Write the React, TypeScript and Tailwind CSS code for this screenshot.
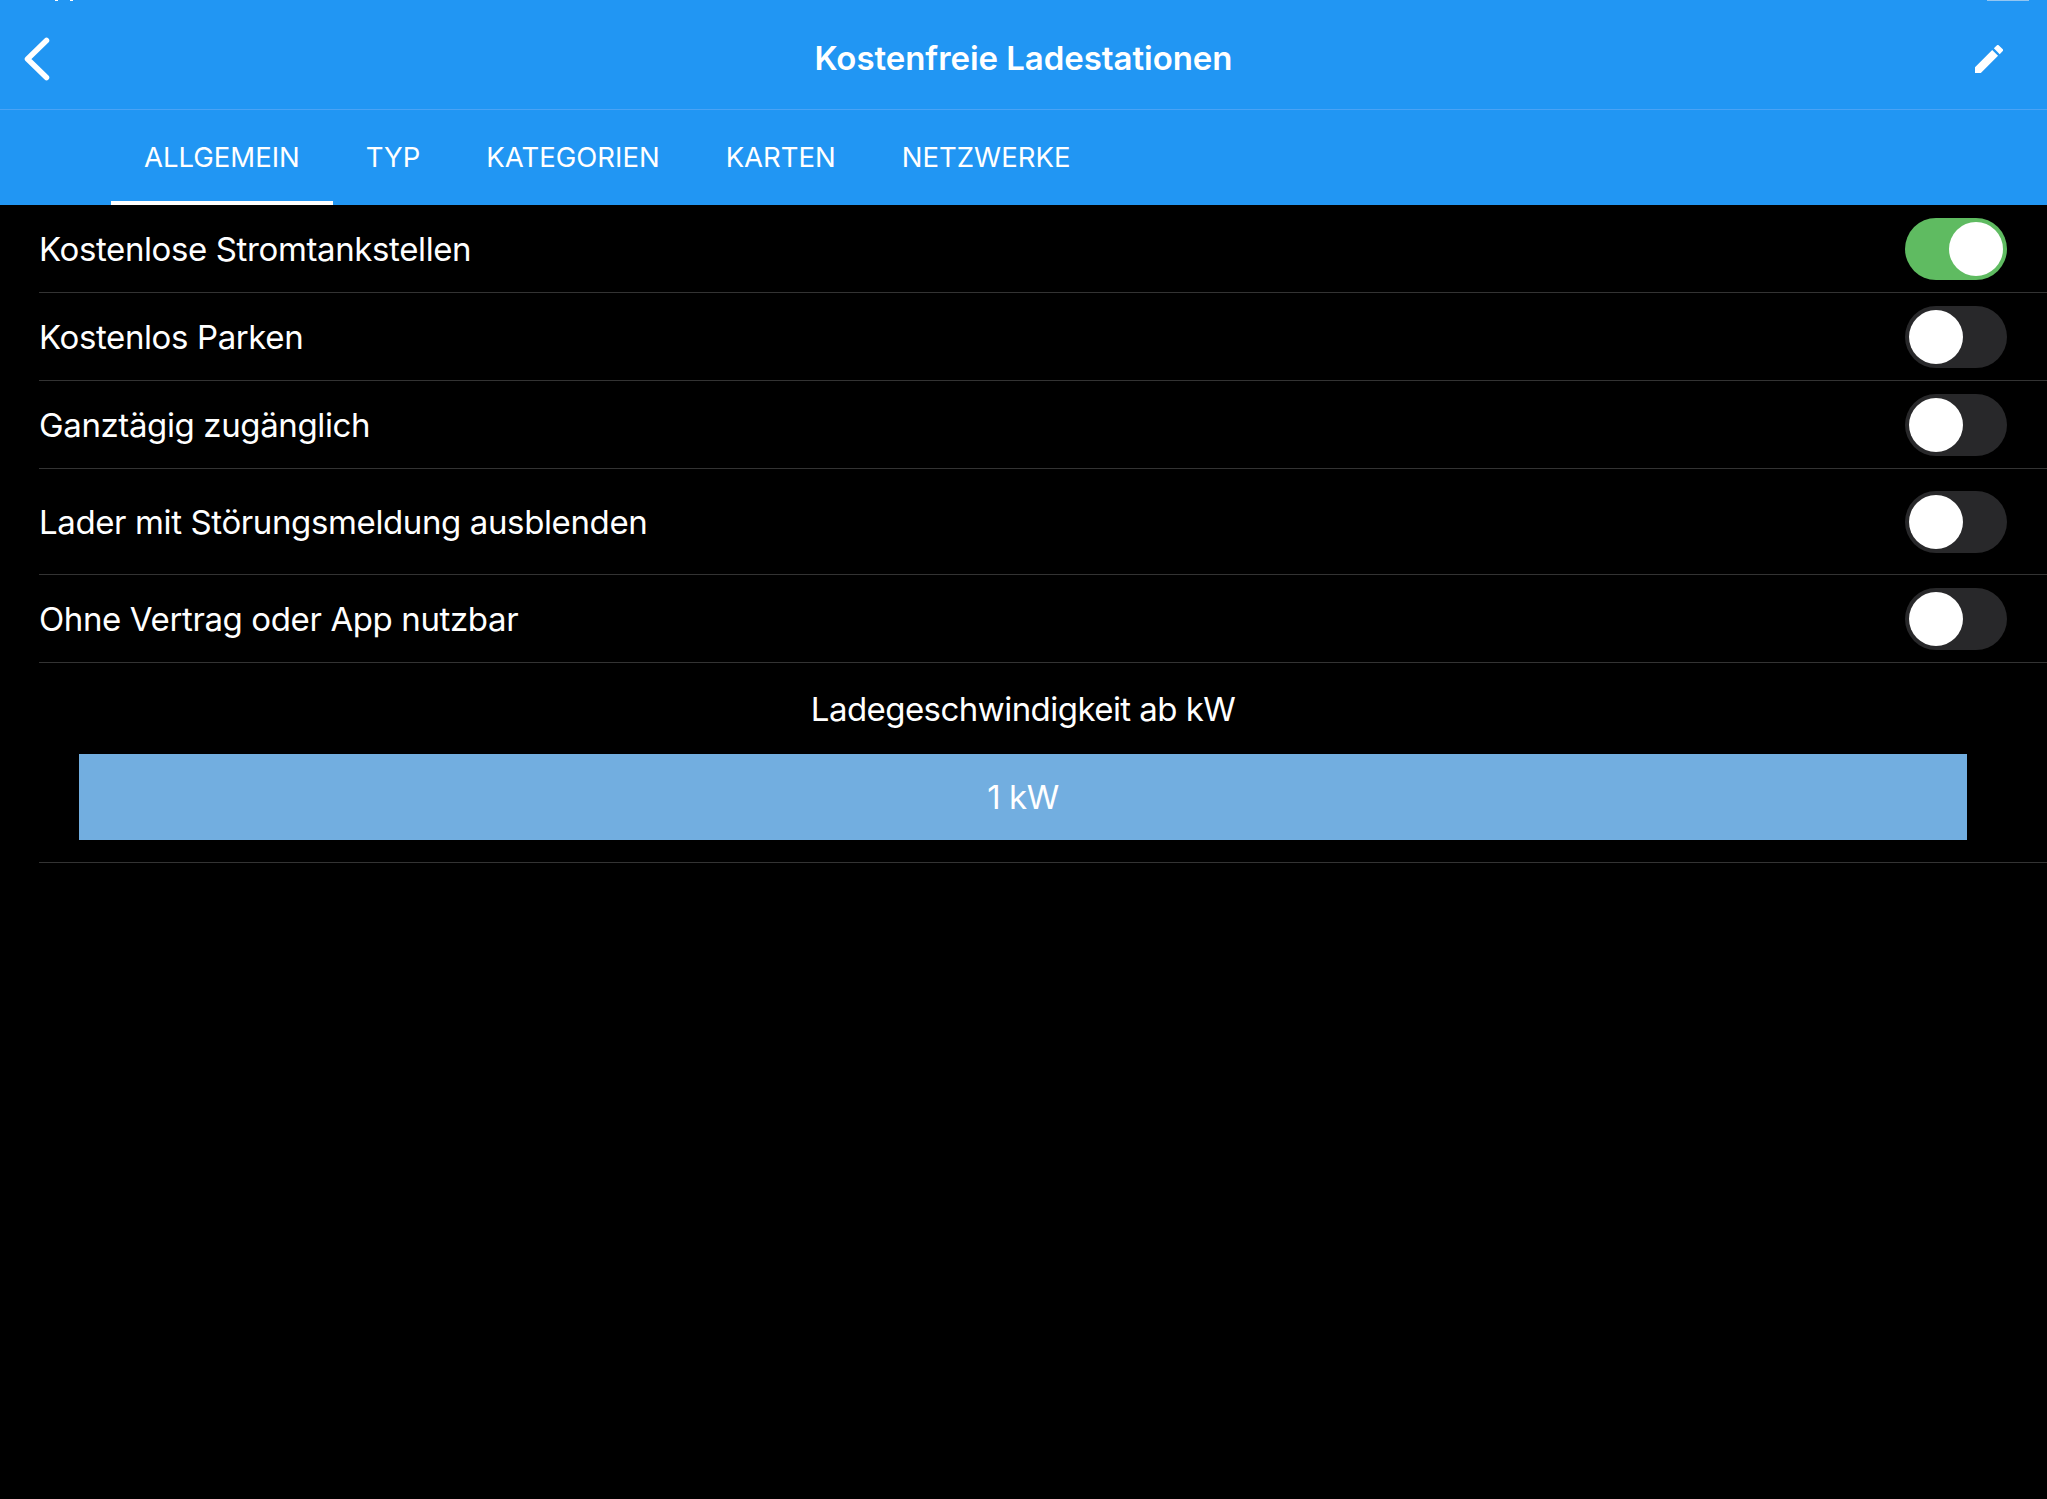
import React from 'react';

const tabs = ['ALLGEMEIN', 'TYP', 'KATEGORIEN', 'KARTEN', 'NETZWERKE'];

const rows = [
  { label: 'Kostenlose Stromtankstellen', on: true, tall: false },
  { label: 'Kostenlos Parken', on: false, tall: false },
  { label: 'Ganztägig zugänglich', on: false, tall: false },
  { label: 'Lader mit Störungsmeldung ausblenden', on: false, tall: true },
  { label: 'Ohne Vertrag oder App nutzbar', on: false, tall: false },
];

const Toggle = ({ on }: { on: boolean }) => (
  <div className={`flex h-[62px] w-[102px] items-center rounded-full px-[4px] ${on ? 'justify-end bg-[#5fbb61]' : 'justify-start bg-[#28282a]'}`}>
    <div className="h-[54px] w-[54px] rounded-full bg-white" />
  </div>
);

export default function App() {
  return (
    <div className="relative flex h-[1499px] w-full flex-col overflow-hidden bg-black font-['Inter',sans-serif] text-white">
      {/* Status bar, cut off at the top edge */}
      <div className="absolute left-[55px] top-0 h-[1px] w-[3px] bg-white" />
      <div className="absolute left-[70px] top-0 h-[1px] w-[3px] bg-white" />
      <div className="absolute left-[1987px] top-0 h-[1px] w-[42px] bg-[#93c6f2]" />

      {/* Header */}
      <div className="flex h-[110px] shrink-0 items-center border-b border-[#4aa3f5] bg-[#2196f3] px-[24px] pt-[9px]">
        <div className="flex-1">
          <svg width="26" height="44" viewBox="0 0 26 44" fill="none" stroke="white" strokeWidth="5.5" strokeLinecap="round" strokeLinejoin="round">
            <path d="M22.5 3.5 L3.5 22 L22.5 40.5" />
          </svg>
        </div>
        <h1 className="text-[33px] font-semibold tracking-[-0.05px]">Kostenfreie Ladestationen</h1>
        <div className="flex flex-1 justify-end">
          <svg className="mr-[20px]" width="28" height="28" viewBox="3 3 18 18" fill="white">
            <path d="M3 17.25V21h3.75L17.81 9.94l-3.75-3.75L3 17.25zM20.71 7.04a1 1 0 0 0 0-1.41l-2.34-2.34a1 1 0 0 0-1.41 0l-1.83 1.83 3.75 3.75 1.83-1.83z" />
          </svg>
        </div>
      </div>

      {/* Tabs */}
      <div className="flex h-[95px] shrink-0 bg-[#2196f3] pl-[111px]">
        {tabs.map((t, i) => (
          <div key={t} className={`flex items-center border-b-[4px] px-[33px] pt-[4px] text-[27.5px] ${i === 0 ? 'border-white' : 'border-transparent'}`}>
            {t}
          </div>
        ))}
      </div>

      {/* Filter rows */}
      <div className="flex flex-col pl-[39px]">
        {rows.map(r => (
          <div key={r.label} className={`flex items-center justify-between border-b border-[#333333] pr-[40px] ${r.tall ? 'h-[106px]' : 'h-[88px]'}`}>
            <span className="pt-[2px] text-[33px] tracking-[-0.38px]">{r.label}</span>
            <Toggle on={r.on} />
          </div>
        ))}
        <div className="flex h-[200px] flex-col items-center border-b border-[#333333] pr-[40px] pt-[22px]">
          <span className="text-[33px] tracking-[-0.55px]">Ladegeschwindigkeit ab kW</span>
          <div className="mt-[19px] flex h-[86px] w-[1888px] items-center justify-center bg-[#72aee0] pt-[3px] text-[33px] tracking-[-0.5px]">1 kW</div>
        </div>
      </div>
    </div>
  );
}
